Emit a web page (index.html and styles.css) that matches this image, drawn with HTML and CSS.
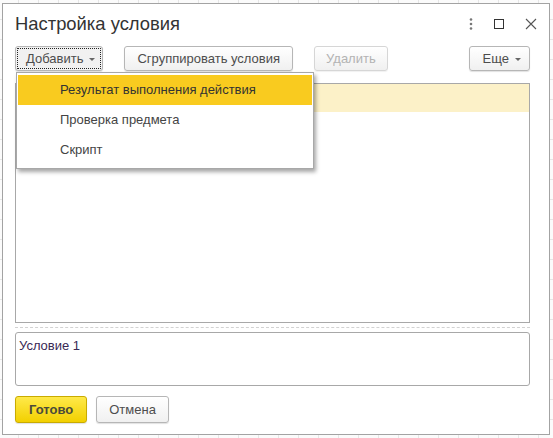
FILE: index.html
```html
<!DOCTYPE html>
<html>
<head>
    <title>Настройка условия</title>
    <link rel="stylesheet" href="styles.css">
</head>
<body>
    <div class="window">
        <div class="title-bar">
            <h1>Настройка условия</h1>
            <div class="title-icons">
                <svg width="4" height="12" viewBox="0 0 4 12"><circle cx="2" cy="1.5" r="1.3" fill="#777"/><circle cx="2" cy="6" r="1.3" fill="#777"/><circle cx="2" cy="10.5" r="1.3" fill="#777"/></svg>
                <svg width="10" height="10" viewBox="0 0 10 10"><rect x="0.5" y="0.5" width="9" height="9" fill="none" stroke="#333" stroke-width="1"/></svg>
                <svg width="12" height="12" viewBox="0 0 12 12"><path d="M1 1L11 11M11 1L1 11" stroke="#555" stroke-width="1.1"/></svg>
            </div>
        </div>

        <div class="toolbar">
            <button class="btn focused">Добавить <span class="caret"></span></button>
            <button class="btn">Сгруппировать условия</button>
            <button class="btn disabled">Удалить</button>
            <button class="btn more">Еще <span class="caret"></span></button>
        </div>

        <div class="tree">
            <div class="tree-row current"></div>
        </div>

        <div class="splitter"></div>

        <div class="text-box">Условие 1</div>

        <div class="footer">
            <button class="btn primary">Готово</button>
            <button class="btn">Отмена</button>
        </div>

        <!-- выпадающее меню кнопки "Добавить" -->
        <div class="menu">
            <div class="menu-item active">Результат выполнения действия</div>
            <div class="menu-item">Проверка предмета</div>
            <div class="menu-item">Скрипт</div>
        </div>
    </div>
</body>
</html>
```

FILE: styles.css
```css
body {
    margin: 0;
    padding: 3px 0 0 2px;
    font-family: "Liberation Sans", Arial, sans-serif;
    font-size: 13px;
    color: #4d4d4d;
    background-color: #fbfbfb;
    background-image:
        linear-gradient(to right, #e6e6e6 1px, transparent 1px),
        linear-gradient(to bottom, #e6e6e6 1px, transparent 1px);
    background-size: 20px 20px;
    background-position: -2px -1px;
    height: 438px;
    box-sizing: border-box;
    overflow: hidden;
}
.window {
    position: relative;
    width: 548px;
    height: 432px;
    box-sizing: border-box;
    background: white;
    border: 1px solid #a3a3a3;
    padding: 0 19px 0 12px;
    display: flex;
    flex-direction: column;
}
.title-bar {
    display: flex;
    align-items: center;
    justify-content: space-between;
    height: 39px;
}
h1 {
    margin: 0;
    font-weight: normal;
    font-size: 18.4px;
    color: #333;
    padding-top: 1px;
}
.title-icons {
    display: flex;
    align-items: center;
    margin-right: -7px;
}
.title-icons svg {
    margin-left: 21px;
}
.toolbar {
    display: flex;
    align-items: flex-start;
    padding-top: 3px;
}
.btn {
    font-family: inherit;
    font-size: 13px;
    color: #4d4d4d;
    height: 25px;
    padding: 0 12px;
    border: 1px solid #b6b6b6;
    border-radius: 3px;
    background: linear-gradient(#ffffff, #f0f0f0);
    box-shadow: 0 1px 1px rgba(0,0,0,0.12);
    margin-right: 21px;
    display: inline-flex;
    align-items: center;
}
.btn.focused {
    outline: 1px dotted #222;
    outline-offset: -3px;
    padding: 0 7px 0 10px;
    background: #f1f1f1;
}
.btn.disabled {
    color: #b3b3b3;
    border-color: #d6d6d6;
    box-shadow: 0 1px 1px rgba(0,0,0,0.06);
    padding: 0 11px;
}
.btn.more {
    margin-left: auto;
    margin-right: 0;
    padding: 0 8px 0 13px;
}
.caret {
    display: inline-block;
    width: 0;
    height: 0;
    border-left: 3px solid transparent;
    border-right: 3px solid transparent;
    border-top: 3px solid #666;
    margin-left: 6px;
    margin-top: 1px;
}
.tree {
    margin-top: 12px;
    height: 240px;
    border: 1px solid #a8a8a8;
    box-sizing: border-box;
}
.tree-row {
    height: 28px;
}
.tree-row.current {
    background: #fcf1c8;
}
.splitter {
    height: 0;
    border-top: 1px dashed #d2d2d2;
    margin: 4px 0 4px;
}
.text-box {
    height: 54px;
    box-sizing: border-box;
    border: 1px solid #a8a8a8;
    border-radius: 3px;
    padding: 5px 3px;
    color: #3a2a55;
}
.footer {
    display: flex;
    margin-top: 10px;
}
.footer .btn {
    height: 27px;
    margin-right: 9px;
    padding: 0 12px;
}
.btn.primary {
    font-weight: bold;
    color: #4a4a3a;
    background: linear-gradient(#ffe94a, #f2d000);
    border-color: #c9ab00;
    padding: 0 13px;
}
.menu {
    position: absolute;
    left: 13px;
    top: 68px;
    width: 294px;
    background: white;
    border: 1px solid #a8a8a8;
    box-shadow: 2px 3px 4px rgba(0,0,0,0.35);
    padding: 2px 1px 3px 1px;
}
.menu-item {
    height: 30px;
    line-height: 30px;
    padding-left: 42px;
    color: #444;
}
.menu-item.active {
    background: #f9cb1f;
    color: #333;
}
```
